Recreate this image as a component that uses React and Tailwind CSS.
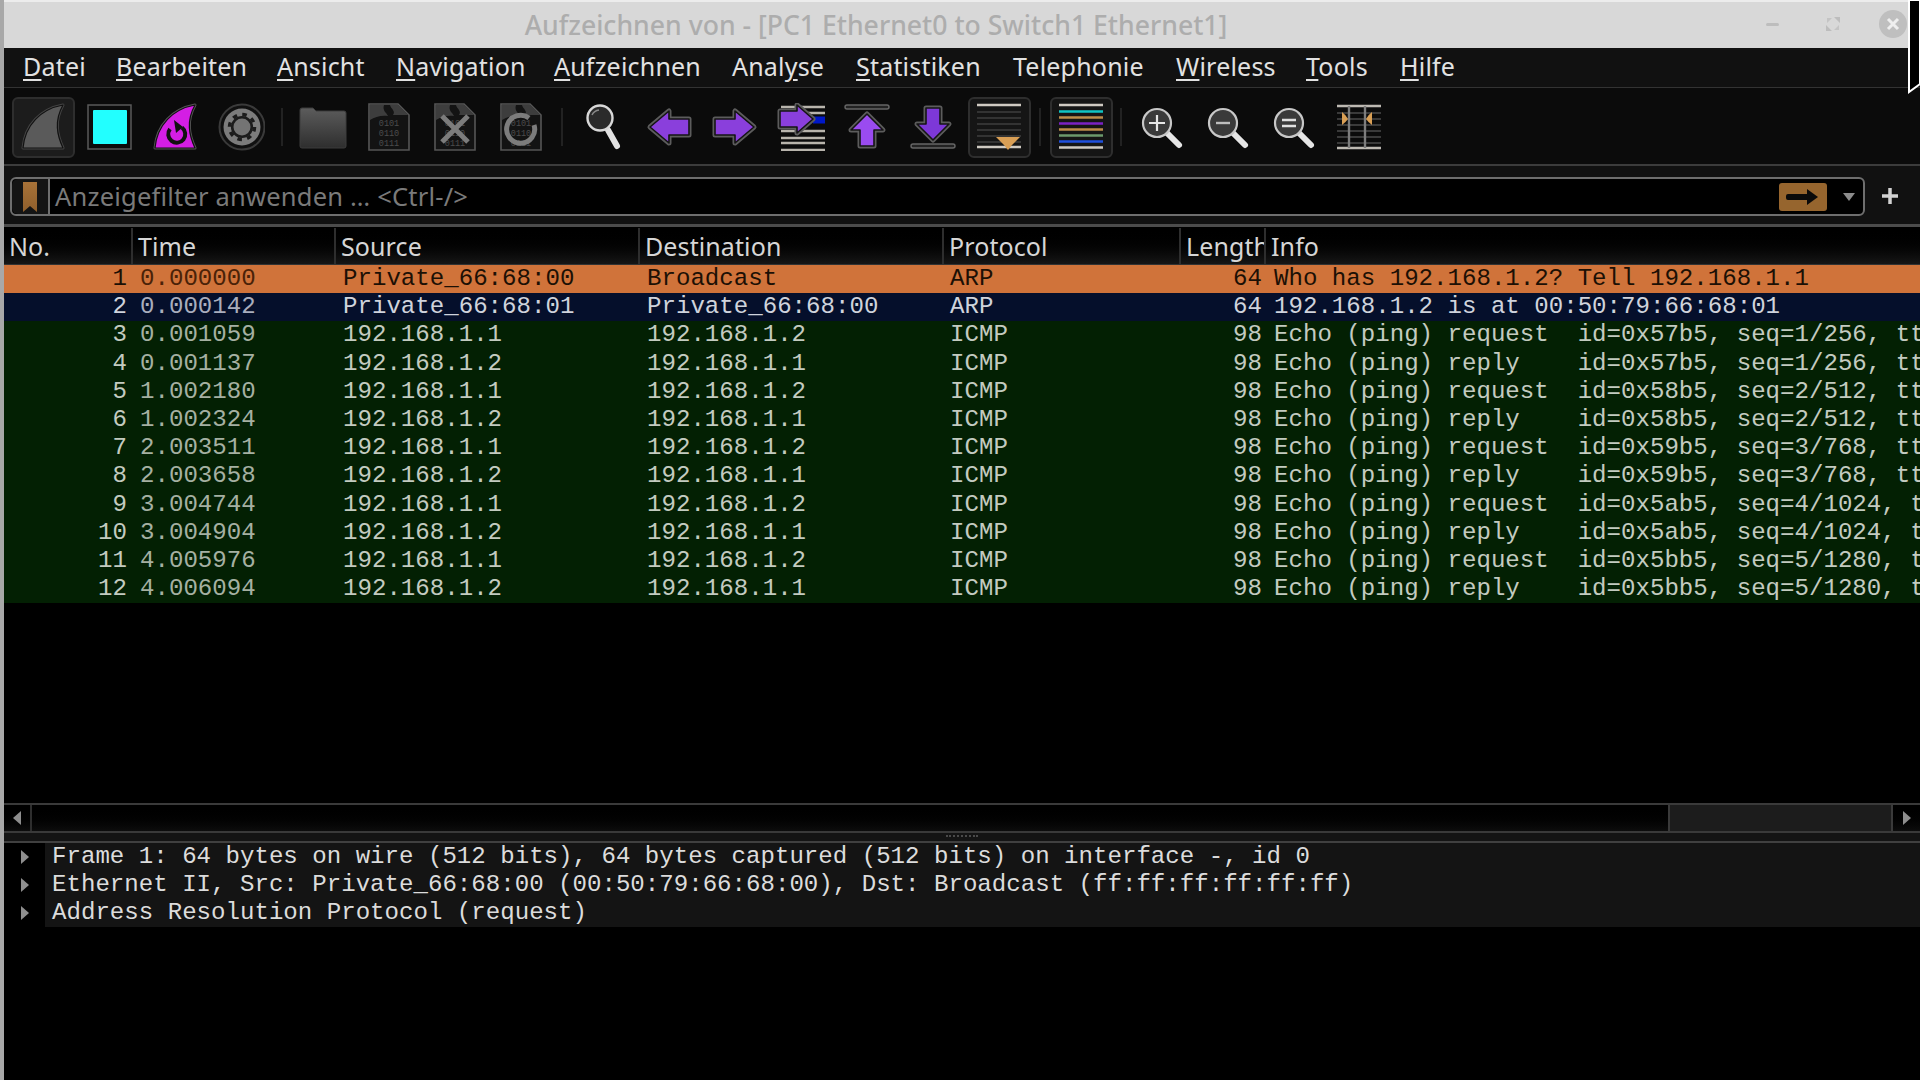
import React from "react";

const sans = "font-['Noto_Sans','Open_Sans',sans-serif]";

const menu = [
  { pre: "", u: "D", post: "atei", w: "w-[93px]" },
  { pre: "", u: "B", post: "earbeiten", w: "w-[161px]" },
  { pre: "", u: "A", post: "nsicht", w: "w-[119px]" },
  { pre: "", u: "N", post: "avigation", w: "w-[158px]" },
  { pre: "", u: "A", post: "ufzeichnen", w: "w-[178px]" },
  { pre: "Anal", u: "y", post: "se", w: "w-[124px]" },
  { pre: "", u: "S", post: "tatistiken", w: "w-[157px]" },
  { pre: "Telephonie", u: "", post: "", w: "w-[163px]" },
  { pre: "", u: "W", post: "ireless", w: "w-[130px]" },
  { pre: "", u: "T", post: "ools", w: "w-[94px]" },
  { pre: "", u: "H", post: "ilfe", w: "w-[80px]" },
];

const mkIcmp = (n, t, req, id, seq) => ({
  n, t,
  src: req ? "192.168.1.1" : "192.168.1.2",
  dst: req ? "192.168.1.2" : "192.168.1.1",
  proto: "ICMP", len: "98",
  info: (req ? "Echo (ping) request  " : "Echo (ping) reply    ") + `id=${id}, seq=${seq}, ttl=64 (${req ? "reply in " + (n + 1) : "request in " + (n - 1)})`,
  kind: "icmp",
});

const rows = [
  { n: 1, t: "0.000000", src: "Private_66:68:00", dst: "Broadcast", proto: "ARP", len: "64", info: "Who has 192.168.1.2? Tell 192.168.1.1", kind: "sel" },
  { n: 2, t: "0.000142", src: "Private_66:68:01", dst: "Private_66:68:00", proto: "ARP", len: "64", info: "192.168.1.2 is at 00:50:79:66:68:01", kind: "arp" },
  mkIcmp(3, "0.001059", true, "0x57b5", "1/256"),
  mkIcmp(4, "0.001137", false, "0x57b5", "1/256"),
  mkIcmp(5, "1.002180", true, "0x58b5", "2/512"),
  mkIcmp(6, "1.002324", false, "0x58b5", "2/512"),
  mkIcmp(7, "2.003511", true, "0x59b5", "3/768"),
  mkIcmp(8, "2.003658", false, "0x59b5", "3/768"),
  mkIcmp(9, "3.004744", true, "0x5ab5", "4/1024"),
  mkIcmp(10, "3.004904", false, "0x5ab5", "4/1024"),
  mkIcmp(11, "4.005976", true, "0x5bb5", "5/1280"),
  mkIcmp(12, "4.006094", false, "0x5bb5", "5/1280"),
];

const kinds = {
  sel: { row: "bg-[#d0733a] text-[#1c1005]", dim: "text-[#4a2208]" },
  arp: { row: "bg-[#050f2b] text-[#cfd3dc]", dim: "text-[#a9adbd]" },
  icmp: { row: "bg-[#032003] text-[#c3cbc0]", dim: "text-[#a5b0a2]" },
};

const S = ({ children }) => (
  <svg width="48" height="48" viewBox="0 0 48 48" fill="none" className="block">{children}</svg>
);

const Outlined = ({ d, fill }) => (
  <>
    <path d={d} fill="#151515" stroke="#5c5c5c" strokeWidth="5" strokeLinejoin="round" />
    <path d={d} fill={fill} stroke="#141414" strokeWidth="1.6" strokeLinejoin="round" />
  </>
);

const finD = "M44 2C22 6 6 22 4 45L44 45C38 32 35 18 44 2Z";

const Fin = () => (
  <S>
    <path d={finD} fill="#5a5a5a" stroke="#444" strokeWidth="3" strokeLinejoin="round" />
    <path d={finD} fill="#5a5a5a" stroke="#111" strokeWidth="1.2" strokeLinejoin="round" />
  </S>
);

const Stop = () => (
  <S>
    <rect x="3" y="2" width="43" height="44" fill="#0c0c0c" stroke="#5a5a5a" strokeWidth="1.5" />
    <rect x="8" y="7" width="34" height="34" rx="1" fill="#22ffff" />
  </S>
);

const Restart = () => (
  <S>
    <path d={finD} fill="#d41ee4" stroke="#555" strokeWidth="3" strokeLinejoin="round" />
    <path d={finD} fill="#d41ee4" stroke="#111" strokeWidth="1.2" strokeLinejoin="round" />
    <path d="M31 24.5A8.5 8.5 0 1 1 19 26" stroke="#111" strokeWidth="4" />
    <path d="M23 17L32 24L25 30Z" fill="#111" />
  </S>
);

const Gear = () => (
  <S>
    <circle cx="25" cy="24" r="22.5" fill="#101010" stroke="#3a3a3a" strokeWidth="2" />
    <circle cx="25" cy="24" r="18.5" fill="#7c7c7c" />
    <circle cx="25" cy="24" r="12.5" stroke="#1c1c1c" strokeWidth="3.5" strokeDasharray="4.5 5.3" />
    <circle cx="25" cy="24" r="9.8" fill="#747474" stroke="#1c1c1c" strokeWidth="2.6" />
  </S>
);

const Folder = () => (
  <S>
    <defs>
      <linearGradient id="fold" x1="0" y1="0" x2="0" y2="1">
        <stop offset="0" stopColor="#5c5c5c" />
        <stop offset="1" stopColor="#2e2e2e" />
      </linearGradient>
    </defs>
    <path d="M1 7Q1 5 3 5L14 5L17 8L45 8Q47 8 47 10L47 43Q47 45 45 45L3 45Q1 45 1 43Z" fill="url(#fold)" stroke="#3c3c3c" />
  </S>
);

const File = ({ children, digits = ["0101", "0110", "0111"] }) => (
  <S>
    <path d="M4 1L33 1L44 12L44 47L4 47Z" fill="#131313" stroke="#565656" strokeWidth="1.6" />
    <path d="M5 2L19 2C17 8 22 10 23 13C16 12 10 14 5 17Z" fill="#3d3d3d" />
    <path d="M25 2L33 2L43 12L28 12C31 8 26 6 25 2Z" fill="#3d3d3d" />
    <g fill="#4c4c4c" fontFamily="'Liberation Mono',monospace" fontSize="8.5" textAnchor="middle">
      <text x="24" y="23">{digits[0]}</text>
      <text x="24" y="33">{digits[1]}</text>
      <text x="24" y="43">{digits[2]}</text>
    </g>
    {children}
  </S>
);

const Magnifier = () => (
  <S>
    <line x1="29" y1="27" x2="38" y2="43" stroke="#e2e2e2" strokeWidth="6" strokeLinecap="round" />
    <circle cx="21" cy="15" r="12.5" fill="#2b2b2b" stroke="#d8d8d8" strokeWidth="2.4" />
    <path d="M13 12A9 9 0 0 1 20 7" stroke="#888" strokeWidth="1.5" />
  </S>
);

const ArrowL = () => (
  <S>
    <Outlined d="M5 24L24 8L24 16L44 16L44 32L24 32L24 40Z" fill="#8a3fdc" />
  </S>
);
const ArrowR = () => (
  <S>
    <Outlined d="M43 24L24 8L24 16L4 16L4 32L24 32L24 40Z" fill="#8a3fdc" />
  </S>
);

const GoTo = () => (
  <S>
    {[4, 10, 28, 35, 40, 47].map((y) => (
      <line key={y} x1="4" x2="48" y1={y} y2={y} stroke="#b8b4ac" strokeWidth="2.6" />
    ))}
    <line x1="36" x2="48" y1="17" y2="17" stroke="#0018c8" strokeWidth="7" />
    <Outlined d="M36 16L20 2L20 8L3 8L3 24L20 24L20 30Z" fill="#8a3fdc" />
  </S>
);

const Up = () => (
  <S>
    <rect x="2" y="2" width="44" height="4" rx="2" fill="#222" stroke="#666" strokeWidth="1.4" />
    <Outlined d="M24 11L40 27L31 27L31 43L17 43L17 27L8 27Z" fill="#9a4bf0" />
  </S>
);
const Down = () => (
  <S>
    <rect x="2" y="41" width="44" height="4" rx="2" fill="#222" stroke="#666" strokeWidth="1.4" />
    <Outlined d="M24 37L40 21L31 21L31 5L17 5L17 21L8 21Z" fill="#7d38d8" />
  </S>
);

const AutoScroll = () => (
  <S>
    {[9, 15, 21, 27, 33, 39].map((y) => (
      <line key={y} x1="2" x2="46" y1={y} y2={y} stroke="#333" strokeWidth="2" />
    ))}
    <line x1="2" x2="46" y1="2" y2="2" stroke="#cfcac2" strokeWidth="2.4" />
    <line x1="2" x2="46" y1="44" y2="44" stroke="#cfcac2" strokeWidth="2.4" />
    <path d="M21 34H45L37 42L33 47L29 42Z" fill="#d99f55" />
  </S>
);

const Colorize = () => (
  <S>
    {[
      [2, "#cfcac2"], [8.5, "#0fc4c4"], [14.5, "#bd8d4a"], [20.5, "#7a22c4"],
      [26.5, "#bd8d4a"], [32.5, "#6c9a6c"], [38.5, "#1f4fdc"], [44.5, "#cfcac2"],
    ].map(([y, c]) => (
      <line key={y} x1="2" x2="46" y1={y} y2={y} stroke={c} strokeWidth="2.4" />
    ))}
  </S>
);

const Zoom = ({ mark }) => (
  <S>
    <line x1="30" y1="30" x2="42" y2="42" stroke="#e6e6e6" strokeWidth="6" strokeLinecap="round" />
    <circle cx="20" cy="20" r="14" fill="#3a3a3a" stroke="#c8c8c8" strokeWidth="2.2" />
    {mark === "plus" && <path d="M12 20H28M20 12V28" stroke="#e6e6e6" strokeWidth="2.2" />}
    {mark === "minus" && <path d="M13 20H27" stroke="#bdbdbd" strokeWidth="2.4" />}
    {mark === "eq" && <path d="M13 17H27M13 23H27" stroke="#e0e0e0" strokeWidth="2.4" />}
  </S>
);

const Resize = () => (
  <S>
    {[10, 16, 22, 28, 34, 40].map((y) => (
      <line key={y} x1="2" x2="46" y1={y} y2={y} stroke="#3a3a3a" strokeWidth="2" />
    ))}
    <line x1="2" x2="46" y1="3" y2="3" stroke="#bdb9b2" strokeWidth="2.4" />
    <line x1="2" x2="46" y1="45" y2="45" stroke="#bdb9b2" strokeWidth="2.4" />
    <line x1="14" x2="14" y1="3" y2="45" stroke="#7d7d7d" strokeWidth="2.4" />
    <line x1="30" x2="30" y1="3" y2="45" stroke="#7d7d7d" strokeWidth="2.4" />
    <path d="M7 9Q11 12 13 16Q11 19 7 22Z" fill="#d99f55" />
    <path d="M37 9Q33 12 31 16Q33 19 37 22Z" fill="#d99f55" />
  </S>
);

const Btn = ({ on, dark, children }) => (
  <div className="w-[66px] h-[61px] shrink-0 flex items-center justify-center">
    <div
      className={
        "w-[63px] h-[61px] rounded-md border-2 flex items-center justify-center " +
        (on ? (dark ? "border-[#2e2e2e] bg-[#1c1c1c]" : "border-[#2e2e2e] bg-[#151515]") : "border-transparent")
      }
    >
      {children}
    </div>
  </div>
);

const Sep = ({ narrow }) => (
  <div className={(narrow ? "w-[14px]" : "w-[16px]") + " shrink-0 flex justify-center"}>
    <div className="w-[2px] h-[38px] bg-[#222]" />
  </div>
);

const COLS = ["w-[129px]", "w-[203px]", "w-[304px]", "w-[304px]", "w-[237px]", "w-[85px]"];

const Head = ({ w, children, last }) => (
  <div className={(last ? "flex-1" : w + " border-r-2 border-[#2e2e2e]") + " shrink-0 h-full pl-[5px] overflow-hidden whitespace-nowrap"}>
    {children}
  </div>
);

const Tri = () => (
  <svg width="12" height="16" viewBox="0 0 12 16" className="block">
    <path d="M2 1L10 8L2 15Z" fill="#8e8e8e" />
  </svg>
);

export default function App() {
  return (
    <div className="relative w-[1920px] h-[1080px] overflow-hidden bg-black flex flex-col border-l-[4px] border-[#a8a8a8]">
      {/* title bar */}
      <div className={"h-[48px] shrink-0 bg-[#d8d8d8] border-t-2 border-[#ececec] relative flex items-center justify-center pr-[172px] pt-[2px] text-[26.6px] font-medium text-[#adadad] " + sans}>
        Aufzeichnen von - [PC1 Ethernet0 to Switch1 Ethernet1]
        <div className="absolute right-[141px] top-[21px] w-[13px] h-[3px] rounded-sm bg-[#bdbdbd]" />
        <svg className="absolute right-[80px] top-[15px]" width="14" height="14" viewBox="0 0 14 14">
          <path d="M0 14V8L6 14ZM14 0V6L8 0Z" fill="#bdbdbd" />
          <path d="M1 6V1H6ZM13 8V13H8Z" fill="#c4c4c4" />
        </svg>
        <div className="absolute right-[13px] top-[8px] w-[28px] h-[28px] rounded-full bg-[#bfbfbf] flex items-center justify-center">
          <svg width="14" height="14" viewBox="0 0 14 14">
            <path d="M2 2L12 12M12 2L2 12" stroke="#efefef" strokeWidth="3" />
          </svg>
        </div>
      </div>

      {/* menu */}
      <div className={"h-[40px] shrink-0 bg-[#111111] border-b border-[#333] flex items-center pl-[19px] pb-[2px] text-[25px] text-[#e2e2e2] tracking-[0.2px] " + sans}>
        {menu.map((m, i) => (
          <div key={i} className={m.w + " shrink-0 whitespace-nowrap"}>
            {m.pre}
            {m.u && <span className="underline underline-offset-[3px] decoration-2">{m.u}</span>}
            {m.post}
          </div>
        ))}
      </div>

      {/* toolbar */}
      <div className="h-[78px] shrink-0 bg-[#0b0b0b] border-b-2 border-[#3c3c3c] flex items-center pl-[6px] pt-[2px]">
        <Btn on dark><Fin /></Btn>
        <Btn><Stop /></Btn>
        <Btn><Restart /></Btn>
        <Btn><Gear /></Btn>
        <Sep />
        <Btn><Folder /></Btn>
        <Btn><File /></Btn>
        <Btn>
          <File>
            <path d="M11 13L37 39M37 13L11 39" stroke="#7c7c7c" strokeWidth="5" />
          </File>
        </Btn>
        <Btn>
          <File>
            <path d="M32 15A14 14 0 1 0 37 22" stroke="#7c7c7c" strokeWidth="5" />
          </File>
        </Btn>
        <Sep />
        <Btn><Magnifier /></Btn>
        <Btn><ArrowL /></Btn>
        <Btn><ArrowR /></Btn>
        <Btn><GoTo /></Btn>
        <Btn><Up /></Btn>
        <Btn><Down /></Btn>
        <Btn on><AutoScroll /></Btn>
        <Sep />
        <Btn on><Colorize /></Btn>
        <Sep narrow />
        <Btn><Zoom mark="plus" /></Btn>
        <Btn><Zoom mark="minus" /></Btn>
        <Btn><Zoom mark="eq" /></Btn>
        <Btn><Resize /></Btn>
      </div>

      {/* filter */}
      <div className="h-[61px] shrink-0 bg-[#111111] border-b-[3px] border-[#4c4c4c] flex items-start pl-[6px] pt-[11px] pr-[14px]">
        <div className="w-[1855px] h-[39px] shrink-0 bg-black border-2 border-[#6e6e6e] rounded-md flex items-center">
          <div className="w-[38px] h-full shrink-0 border-r-2 border-[#6e6e6e] flex items-center justify-center bg-[#141414] rounded-l-md">
            <svg width="16" height="30" viewBox="0 0 16 30" className="block">
              <defs>
                <linearGradient id="bm" x1="0" y1="0" x2="0" y2="1">
                  <stop offset="0" stopColor="#a87238" />
                  <stop offset="1" stopColor="#8f5f2c" />
                </linearGradient>
              </defs>
              <path d="M1 0H15V30L8 24L1 30Z" fill="url(#bm)" />
            </svg>
          </div>
          <div className={"flex-1 pl-[5px] pb-[1px] text-[25.5px] tracking-[0.2px] text-[#7a7a7a] whitespace-nowrap " + sans}>
            Anzeigefilter anwenden … &lt;Ctrl-/&gt;
          </div>
          <div className="w-[48px] h-[28px] shrink-0 rounded-[3px] bg-[#96652e] flex items-center justify-center">
            <svg width="34" height="18" viewBox="0 0 34 18" className="block">
              <path d="M2 6H21V1L32 9L21 17V12H2Q0 12 0 10V8Q0 6 2 6Z" fill="#0a0a0a" />
            </svg>
          </div>
          <div className="w-[36px] shrink-0 flex items-center justify-center pl-[8px]">
            <svg width="14" height="8" viewBox="0 0 14 8" className="block">
              <path d="M1 0H13L7 8Z" fill="#8c8c8c" />
            </svg>
          </div>
        </div>
        <svg width="18" height="18" viewBox="0 0 18 18" className="block ml-[16px] mt-[10px]">
          <path d="M9 1V17M1 9H17" stroke="#d2d2d2" strokeWidth="3.5" />
        </svg>
      </div>

      {/* header */}
      <div className={"h-[38px] shrink-0 flex items-start pt-[1px] bg-gradient-to-b from-[#000] to-[#161616] border-b border-[#333] text-[25px] leading-[36px] text-[#d6d6d6] tracking-[0.1px] " + sans}>
        <Head w={COLS[0]}>No.</Head>
        <Head w={COLS[1]}>Time</Head>
        <Head w={COLS[2]}>Source</Head>
        <Head w={COLS[3]}>Destination</Head>
        <Head w={COLS[4]}>Protocol</Head>
        <Head w={COLS[5]}>Length</Head>
        <Head last>Info</Head>
      </div>

      {/* packet list */}
      <div className="h-[538px] shrink-0 bg-black font-['Liberation_Mono',monospace] text-[24.1px] leading-[28.2px]">
        {rows.map((r) => (
          <div key={r.n} className={"h-[28.2px] flex whitespace-pre overflow-hidden " + kinds[r.kind].row}>
            <div className="w-[128px] shrink-0 text-right pr-[5px]">{r.n}</div>
            <div className={"w-[203px] shrink-0 pl-[8px] " + kinds[r.kind].dim}>{r.t}</div>
            <div className="w-[304px] shrink-0 pl-[8px]">{r.src}</div>
            <div className="w-[304px] shrink-0 pl-[8px]">{r.dst}</div>
            <div className="w-[237px] shrink-0 pl-[7px]">{r.proto}</div>
            <div className="w-[85px] shrink-0 text-right pr-[3px]">{r.len}</div>
            <div className="flex-1 pl-[9px] overflow-hidden">{r.info}</div>
          </div>
        ))}
      </div>

      {/* horizontal scrollbar */}
      <div className="h-[30px] shrink-0 flex border-y-2 border-[#3a3a3a] bg-gradient-to-b from-[#000] to-[#0d0d0d]">
        <div className="w-[28px] shrink-0 border-r-2 border-[#2e2e2e] flex items-center justify-center">
          <div className="rotate-180"><Tri /></div>
        </div>
        <div className="flex-1" />
        <div className="w-[225px] shrink-0 bg-[#1c1c1c] border-x-2 border-[#3a3a3a]" />
        <div className="w-[27px] shrink-0 flex items-center justify-center">
          <Tri />
        </div>
      </div>

      {/* splitter */}
      <div className="h-[10px] shrink-0 bg-[#141414] border-b-2 border-[#404040] flex justify-center items-start pt-[2px]">
        <div className="w-[32px] h-[2px] border-t-2 border-dotted border-[#4a4a4a]" />
      </div>

      {/* details */}
      <div className="flex-1 bg-black font-['Liberation_Mono',monospace] text-[24.1px] leading-[28px] text-[#dcdcdc]">
        {[
          "Frame 1: 64 bytes on wire (512 bits), 64 bytes captured (512 bits) on interface -, id 0",
          "Ethernet II, Src: Private_66:68:00 (00:50:79:66:68:00), Dst: Broadcast (ff:ff:ff:ff:ff:ff)",
          "Address Resolution Protocol (request)",
        ].map((t) => (
          <div key={t} className="h-[28px] flex whitespace-pre">
            <div className="w-[41px] shrink-0 flex items-center pl-[15px]"><Tri /></div>
            <div className="flex-1 bg-[#141414] pl-[7px]">{t}</div>
          </div>
        ))}
      </div>

      {/* edge of the window behind */}
      <svg className="absolute right-0 top-0" width="12" height="94" viewBox="0 0 12 94">
        <path d="M1 0V92L12 84V0Z" fill="#000" stroke="#fff" strokeWidth="2" />
      </svg>
    </div>
  );
}
